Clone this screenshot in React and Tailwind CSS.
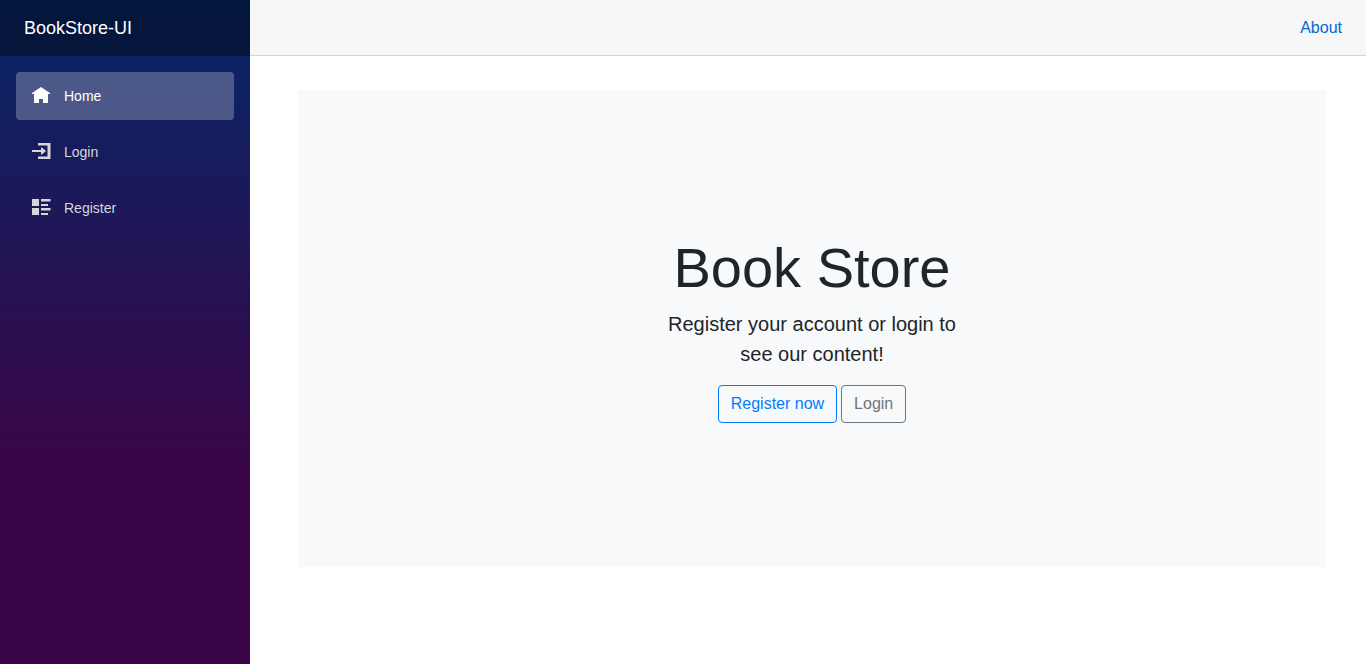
import React from "react";

const links = [
  {
    label: "Home",
    active: true,
    icon: <path d="M9 0L0 6v1h2v9h5v-4h4v4h5V7h2V6z" />,
  },
  {
    label: "Login",
    icon: (
      <path d="M6 0v2.500h9.500v11H6V16h12.500V0zM9 5v2H0v2h9v2.500h1L14 8l-4-3.500z" />
    ),
  },
  {
    label: "Register",
    icon: (
      <path d="M0 0h7v7H0zM9 0h9.500v2.500H9zM9 5h7v2H9zM0 9h7v7H0zM9 9h9.500v2.500H9zM9 14h7v2H9z" />
    ),
  },
];

export default function App() {
  return (
    <div className="flex min-h-screen bg-white font-['Liberation_Sans',Arial,sans-serif] text-[#212529]">
      <aside className="w-[250px] shrink-0 bg-[linear-gradient(180deg,rgb(5,39,103)_0%,#3a0647_70%)]">
        <div className="flex h-14 items-center bg-black/40 px-6">
          <a href="#home" className="text-lg text-white">BookStore-UI</a>
        </div>
        <nav className="flex flex-col gap-2 px-4 pt-4">
          {links.map(({ label, active, icon }) => (
            <a
              key={label}
              href={"#" + label.toLowerCase()}
              aria-current={active ? "page" : undefined}
              className={
                "flex h-12 items-center rounded px-4 text-sm " +
                (active ? "bg-white/25 text-white" : "text-[#d7d7d7]")
              }
            >
              <svg
                viewBox="0 0 18 18"
                className="mr-3.5 size-[18px] shrink-0 overflow-visible"
                fill="currentColor"
                aria-hidden="true"
              >
                {icon}
              </svg>
              {label}
            </a>
          ))}
        </nav>
      </aside>
      <div className="flex min-w-0 flex-1 flex-col">
        <header className="flex h-14 items-center justify-end border-b border-[#d6d5d5] bg-[#f7f7f7] px-6">
          <a href="#about" className="text-base text-[#0366d6]">About</a>
        </header>
        <main className="pt-[34px] pr-10 pl-12">
          <section className="flex flex-col items-center bg-[#f8f9fa] px-4 py-36 text-center">
            <h1 className="mb-2 text-[56px] leading-[67px]">Book Store</h1>
            <p className="mb-4 max-w-80 text-xl leading-[30px]">
              Register your account or login to see our content!
            </p>
            <div className="flex gap-1">
              <button type="button" className="rounded border border-[#007bff] px-3 py-1.5 text-base text-[#007bff]">
                Register now
              </button>
              <button type="button" className="rounded border border-[#6c757d] px-3 py-1.5 text-base text-[#6c757d]">
                Login
              </button>
            </div>
          </section>
        </main>
      </div>
    </div>
  );
}
